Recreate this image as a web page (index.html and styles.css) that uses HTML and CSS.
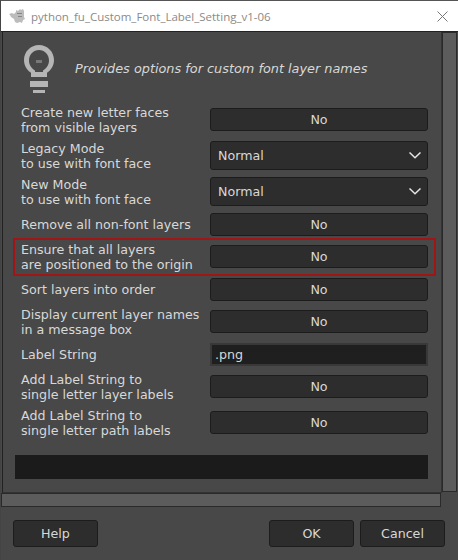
FILE: index.html
```html
<!DOCTYPE html>
<html lang="en">
<head>
    <meta charset="UTF-8">
    <title>python_fu_Custom_Font_Label_Setting_v1-06</title>
    <link rel="stylesheet" href="styles.css">
</head>
<body>
    <div class="window">
        <div class="titlebar">
            <svg class="gimp" width="17" height="16" viewBox="0 0 17 16">
                <path d="M0 6l3-1 2 1 2-2V2l2 1 2-2 1 1 2-1 1 2v6l1 2-2 1-1 3-2-1-3 1-2-1-1-3-3-2-1-2z" fill="#bcbcbc"/>
                <path d="M8 5h5v1H8zM9 8h4v1H9z" fill="#858585"/>
            </svg>
            <span class="title">python_fu_Custom_Font_Label_Setting_v1-06</span>
            <svg class="close" width="11" height="11" viewBox="0 0 11 11">
                <path d="M.5.5l10 10M10.500.5l-10 10" stroke="#777" stroke-width="1" fill="none"/>
            </svg>
        </div>

        <div class="scroll-area">
            <div class="frame">
                <div class="intro">
                    <svg class="bulb" width="34" height="48" viewBox="0 0 34 48">
                        <path fill-rule="evenodd" d="M18 0C9.700 0 3 6.700 3 15c0 5.500 2.900 10.200 7 12.800V32h16v-4.200c4.100-2.600 7-7.300 7-12.800C33 6.700 26.300 0 18 0zM18 5c5.500 0 10 4.500 10 10.500 0 4.500-2.800 8.200-6 10V27h-8v-1.500c-3.200-1.800-6-5.500-6-10C8 9.500 12.500 5 18 5z" fill="#b5b5b5"/>
                        <rect x="15" y="15" width="6" height="3" fill="#787878"/>
                        <rect x="9" y="36" width="18" height="6" fill="#b5b5b5"/>
                        <rect x="12" y="45" width="12" height="3" fill="#b5b5b5"/>
                    </svg>
                    <em class="intro-text">Provides options for custom font layer names</em>
                </div>

                <div class="row row-first">
                    <label>Create new letter faces<br>from visible layers</label>
                    <button class="field">No</button>
                </div>
                <div class="row wide">
                    <label>Legacy Mode<br>to use with font face</label>
                    <div class="field select">Normal
                        <svg width="12" height="7" viewBox="0 0 12 7"><path d="M.5.5L6 5.800 11.500.5" stroke="#e4e4e4" stroke-width="1.500" fill="none"/></svg>
                    </div>
                </div>
                <div class="row wide">
                    <label>New Mode<br>to use with font face</label>
                    <div class="field select">Normal
                        <svg width="12" height="7" viewBox="0 0 12 7"><path d="M.5.5L6 5.800 11.500.5" stroke="#e4e4e4" stroke-width="1.500" fill="none"/></svg>
                    </div>
                </div>
                <div class="row">
                    <label>Remove all non-font layers</label>
                    <button class="field">No</button>
                </div>
                <div class="row tight">
                    <label>Ensure that all layers<br>are positioned to the origin</label>
                    <button class="field">No</button>
                    <div class="marker"></div>
                </div>
                <div class="row">
                    <label>Sort layers into order</label>
                    <button class="field">No</button>
                </div>
                <div class="row tight">
                    <label>Display current layer names<br>in a message box</label>
                    <button class="field">No</button>
                </div>
                <div class="row">
                    <label>Label String</label>
                    <div class="field entry">.png</div>
                </div>
                <div class="row tight">
                    <label>Add Label String to<br>single letter layer labels</label>
                    <button class="field">No</button>
                </div>
                <div class="row wide">
                    <label>Add Label String to<br>single letter path labels</label>
                    <button class="field">No</button>
                </div>

                <div class="status"></div>
            </div>
            <div class="vscroll"></div>
        </div>
        <div class="hscroll"></div>

        <div class="actions">
            <button class="btn">Help</button>
            <div class="spacer"></div>
            <button class="btn">OK</button>
            <button class="btn">Cancel</button>
        </div>
    </div>
</body>
</html>
```

FILE: styles.css
```css
*{
    padding: 0;
    margin: 0;
    box-sizing: border-box;
}
body{
    background-color: #484848;
}
.window{
    width: 458px;
    height: 560px;
    background-color: #484848;
    border-top: 1px solid #555;
    border-left: 1px solid #444;
    font-family: "DejaVu Sans", sans-serif;
    font-size: 12.65px;
    color: #d8d8d8;
    display: flex;
    flex-direction: column;
}
/* title bar */
.titlebar{
    height: 31px;
    background-color: #fff;
    border-bottom: 1px solid #222;
    display: flex;
    align-items: center;
    padding-left: 8px;
    padding-right: 10px;
    flex-shrink: 0;
}
.title{
    font-family: "Open Sans", sans-serif;
    font-size: 11.5px;
    color: #8a8a8a;
    margin-left: 5px;
    flex: 1;
}
/* scrolled part */
.scroll-area{
    display: flex;
    height: 461px;
    flex-shrink: 0;
}
.frame{
    width: 440px;
    margin-left: 1px;
    border-left: 1px solid #222;
    border-right: 1px solid #333;
    border-bottom: 1px solid #333;
    padding: 13px 0 0 18px;
}
.intro{
    display: flex;
    align-items: center;
    height: 48px;
}
.intro-text{
    margin-left: 20px;
    margin-top: -2px;
    font-size: 12.85px;
}
/* every row is as tall as a button, the labels and combos stick out evenly */
.row{
    display: flex;
    align-items: center;
    height: 23px;
    margin-top: 10px;
    position: relative;
}
.row-first{
    margin-top: 15px;
}
.tight{
    margin-top: 9px;
}
.wide{
    margin-top: 13px;
}
.row label{
    width: 189px;
    line-height: 15px;
    flex-shrink: 0;
}
.field{
    width: 218px;
    height: 23px;
    flex-shrink: 0;
    background-color: #2d2d2d;
    border: 1px solid #1c1c1c;
    border-radius: 3px;
    color: #d8d8d8;
    font: inherit;
    text-align: center;
}
.select{
    height: 29px;
    display: flex;
    align-items: center;
    justify-content: space-between;
    padding: 0 6px 0 7px;
}
.entry{
    background-color: #1f1f1f;
    border: 2px solid #383838;
    border-radius: 0;
    text-align: left;
    padding-left: 3px;
    line-height: 19px;
}
/* red annotation round one row */
.marker{
    position: absolute;
    left: -8px;
    top: -7px;
    width: 423px;
    height: 38px;
    border: 2px solid #a01515;
}
.status{
    width: 413px;
    height: 24px;
    margin-top: 21px;
    margin-left: -6px;
    background-color: #1b1b1b;
}
.vscroll{
    width: 15px;
    height: 460px;
    background-color: #5c5c5c;
    border: 1px solid #2a2a2a;
}
.hscroll{
    width: 440px;
    height: 14px;
    background-color: #5c5c5c;
    border: 1px solid #2a2a2a;
    flex-shrink: 0;
}
/* bottom buttons */
.actions{
    display: flex;
    gap: 6px;
    padding: 13px 13px 0 12px;
}
.spacer{
    flex: 1;
}
.btn{
    width: 85px;
    height: 27px;
    background-color: #2d2d2d;
    border: 1px solid #1c1c1c;
    border-radius: 3px;
    color: #d8d8d8;
    font: inherit;
}
```
